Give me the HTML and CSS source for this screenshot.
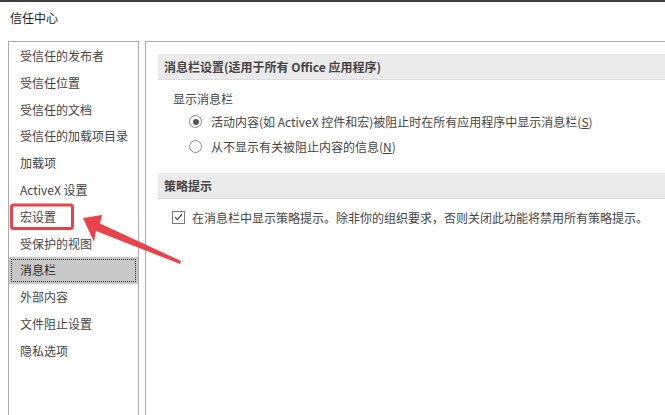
FILE: index.html
```html
<!DOCTYPE html>
<html lang="zh-CN">
<head>
<meta charset="utf-8">
<title>信任中心</title>
<link rel="stylesheet" href="styles.css">
</head>
<body>
<div class="page">
  <div class="topbar"></div>
  <div class="title">信任中心</div>
  <div class="main">
    <ul class="nav">
      <li>受信任的发布者</li>
      <li>受信任位置</li>
      <li>受信任的文档</li>
      <li>受信任的加载项目录</li>
      <li>加载项</li>
      <li>ActiveX 设置</li>
      <li>宏设置</li>
      <li>受保护的视图</li>
      <li class="selected">消息栏</li>
      <li>外部内容</li>
      <li>文件阻止设置</li>
      <li>隐私选项</li>
    </ul>
    <div class="panel">
      <div class="section-head">消息栏设置(适用于所有 Office 应用程序)</div>
      <div class="group-label">显示消息栏</div>
      <div class="radio-row"><span class="radio checked"></span><span>活动内容(如 ActiveX 控件和宏)被阻止时在所有应用程序中显示消息栏(<u>S</u>)</span></div>
      <div class="radio-row"><span class="radio"></span><span>从不显示有关被阻止内容的信息(<u>N</u>)</span></div>
      <div class="section-head second">策略提示</div>
      <div class="check-row"><span class="checkbox"><svg width="12" height="12" viewBox="0 0 12 12"><path d="M2.2 6.2 L4.8 8.8 L9.8 3" fill="none" stroke="#444" stroke-width="1.3"/></svg></span><span>在消息栏中显示策略提示。除非你的组织要求，否则关闭此功能将禁用所有策略提示。</span></div>
    </div>
  </div>
  <svg class="annot" width="665" height="415" viewBox="0 0 665 415">
    <rect x="11.5" y="205" width="61" height="23.5" rx="2" fill="none" stroke="#e8434a" stroke-width="3"/>
    <polygon points="83,218 102,215 100,223.5 181,261 180,264 96,231 94,242" fill="#e8434a"/>
  </svg>
</div>
</body>
</html>
```
FILE: styles.css
```css
html, body {
  margin: 0;
  padding: 0;
  background: #ffffff;
}
.page {
  position: relative;
  width: 665px;
  height: 415px;
  overflow: hidden;
  font-family: "Noto Sans CJK SC", "Noto Sans", sans-serif;
  font-size: 12px;
  color: #444444;
}
.topbar {
  height: 2px;
  background: #3d3d3d;
}
.title {
  height: 20px;
  line-height: 20px;
  padding: 6px 0 13px 10px;
  color: #222222;
}
.main {
  display: flex;
  gap: 6px;
  padding-left: 8px;
}
.nav {
  list-style: none;
  margin: 0;
  padding: 1px 0 0 0;
  width: 129px;
  height: 420px;
  border: 1px solid #ababab;
  flex: none;
}
.nav li {
  height: 26.8px;
  line-height: 26.8px;
  padding-left: 11px;
  white-space: nowrap;
}
.nav li.selected {
  background: #c8c8c8;
  color: #2a2a2a;
  outline: 1px dotted #333333;
  outline-offset: -3px;
}
.panel {
  flex: 1;
  height: 420px;
  border-left: 1px solid #ababab;
  border-top: 1px solid #ababab;
  padding-top: 12px;
  padding-left: 12px;
}
.section-head {
  height: 25px;
  line-height: 25px;
  background: #ebebeb;
  border-bottom: 1px solid #dcdcdc;
  padding-left: 6px;
  font-weight: 700;
  color: #444444;
  white-space: nowrap;
}
.section-head.second {
  margin-top: 14px;
}
.group-label {
  margin-top: 9px;
  padding-left: 15px;
  height: 20px;
  line-height: 20px;
}
.radio-row {
  display: flex;
  align-items: center;
  gap: 9px;
  height: 25px;
  padding-left: 31px;
  white-space: nowrap;
}
.radio {
  box-sizing: border-box;
  width: 13px;
  height: 13px;
  border: 1px solid #8a8a8a;
  border-radius: 50%;
  display: flex;
  align-items: center;
  justify-content: center;
  flex: none;
}
.radio.checked::after {
  content: "";
  width: 6px;
  height: 6px;
  border-radius: 50%;
  background: #555555;
}
.check-row {
  display: flex;
  align-items: center;
  gap: 7px;
  margin-top: 8px;
  height: 20px;
  padding-left: 14px;
  white-space: nowrap;
}
.checkbox {
  box-sizing: border-box;
  width: 13px;
  height: 13px;
  border: 1px solid #7a7a7a;
  display: flex;
  align-items: center;
  justify-content: center;
  flex: none;
}
.checkbox svg {
  display: block;
}
u {
  text-decoration: underline;
  text-underline-offset: 1px;
}
.annot {
  position: absolute;
  left: 0;
  top: 0;
  pointer-events: none;
}
```
